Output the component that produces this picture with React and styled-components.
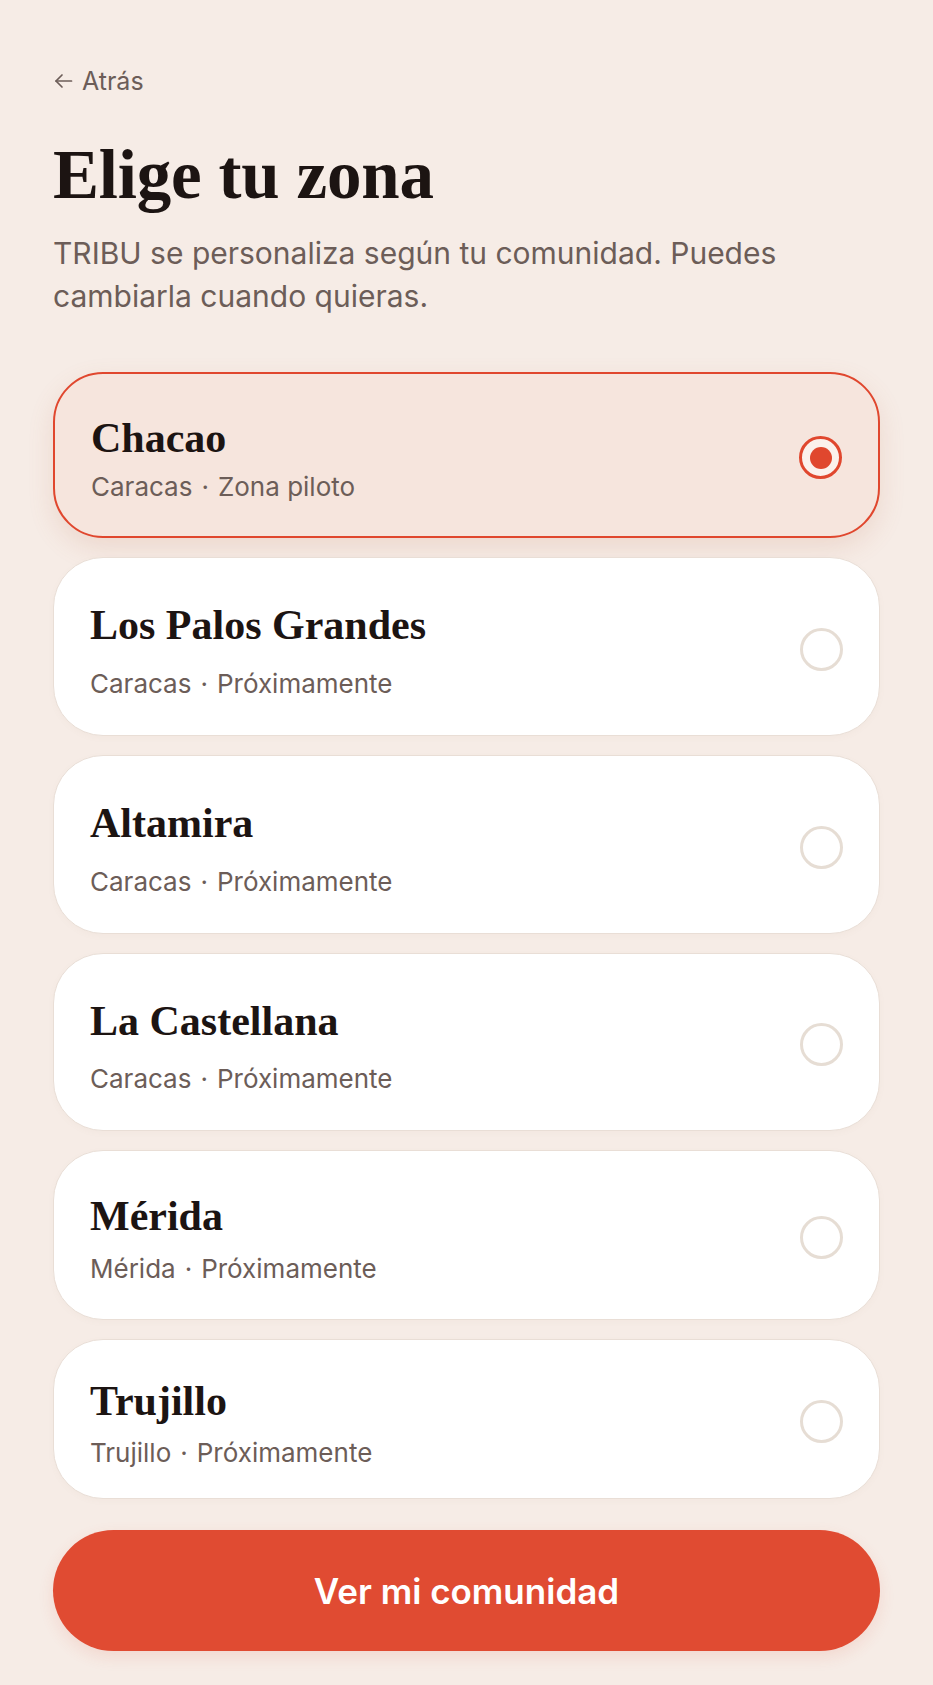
import React, { useState } from "react";
import styled, { createGlobalStyle } from "styled-components";

const GlobalStyle = createGlobalStyle`
  html, body {
    margin: 0;
    padding: 0;
    background: #f6ece6;
  }
  body {
    font-family: Inter, "Noto Sans", sans-serif;
    -webkit-font-smoothing: antialiased;
  }
  * { box-sizing: border-box; }
`;

const Page = styled.main`
  min-height: 1685px;
  padding: 66px 53px 0 53px;
  display: flex;
  flex-direction: column;
`;

const BackLink = styled.button`
  align-self: flex-start;
  display: inline-flex;
  align-items: center;
  gap: 9px;
  padding: 0;
  border: 0;
  background: none;
  color: #6c5d58;
  font-family: Inter, sans-serif;
  font-size: 25px;
  line-height: 30px;
  cursor: pointer;
  margin-left: 1px;
`;

const Title = styled.h1`
  margin: 43px 0 0 0;
  font-family: "Liberation Serif", serif;
  font-weight: 700;
  font-size: 69px;
  line-height: 72px;
  color: #1c1412;
  letter-spacing: -0.2px;
`;

const Lead = styled.p`
  margin: 21px 0 0 0;
  font-family: Inter, sans-serif;
  font-size: 30px;
  line-height: 43px;
  color: #6c5d58;
  max-width: 780px;
`;

const ZoneList = styled.ul`
  list-style: none;
  margin: 54px 0 0 0;
  padding: 0;
  display: flex;
  flex-direction: column;
  gap: 19px;
`;

const ZoneCard = styled.li`
  height: ${(p) => p.$h}px;
  padding: 5px 36px 0 36px;
  display: flex;
  align-items: center;
  justify-content: space-between;
  border-radius: 50px;
  border: ${(p) => (p.$active ? "2px solid #e0472e" : "1.5px solid #e9ded6")};
  background: ${(p) => (p.$active ? "#f6e5dd" : "#ffffff")};
  box-shadow: ${(p) =>
    p.$active
      ? "0 10px 26px rgba(190, 110, 80, 0.16)"
      : "0 2px 6px rgba(160, 120, 100, 0.04)"};
  cursor: pointer;
`;

const ZoneText = styled.div`
  display: flex;
  flex-direction: column;
`;

const ZoneName = styled.span`
  font-family: "Liberation Serif", serif;
  font-weight: 700;
  font-size: 42px;
  line-height: 50px;
  color: #1c1412;
`;

const ZoneMeta = styled.span`
  margin-top: ${(p) => p.$gap - 35}px;
  font-family: Inter, sans-serif;
  font-size: 26px;
  line-height: 30px;
  color: #6c5d58;
`;

const Dot = styled.span`
  margin: 0 9px;
`;

const Radio = styled.span`
  flex: none;
  width: 43px;
  height: 43px;
  border-radius: 50%;
  border: 3.5px solid ${(p) => (p.$active ? "#e0472e" : "#e6ddd4")};
  display: flex;
  align-items: center;
  justify-content: center;
  background: ${(p) => (p.$active ? "#fbf1ec" : "transparent")};
  &::after {
    content: "";
    display: ${(p) => (p.$active ? "block" : "none")};
    width: 22px;
    height: 22px;
    border-radius: 50%;
    background: #e0472e;
  }
`;

const PrimaryButton = styled.button`
  margin-top: 31px;
  height: 121px;
  border: 0;
  border-radius: 61px;
  background: #e04b32;
  color: #ffffff;
  font-family: Inter, sans-serif;
  font-weight: 600;
  font-size: 35px;
  box-shadow: 0 6px 16px rgba(224, 75, 50, 0.12);
  cursor: pointer;
`;

const ArrowIcon = () => (
  <svg width="19" height="16" viewBox="0 0 19 16" fill="none" stroke="currentColor" strokeWidth="1.7" strokeLinecap="round" strokeLinejoin="round">
    <path d="M17.5 8H2" />
    <path d="M8 2L2 8l6 6" />
  </svg>
);

const zones = [
  { name: "Chacao", city: "Caracas", status: "Zona piloto", h: 166, gap: 44 },
  { name: "Los Palos Grandes", city: "Caracas", status: "Próximamente", h: 179, gap: 54 },
  { name: "Altamira", city: "Caracas", status: "Próximamente", h: 179, gap: 54 },
  { name: "La Castellana", city: "Caracas", status: "Próximamente", h: 178, gap: 53 },
  { name: "Mérida", city: "Mérida", status: "Próximamente", h: 170, gap: 48 },
  { name: "Trujillo", city: "Trujillo", status: "Próximamente", h: 160, gap: 47 },
];

export default function App() {
  const [selected, setSelected] = useState("Chacao");
  return (
    <>
      <GlobalStyle />
      <Page>
        <BackLink>
          <ArrowIcon />
          Atrás
        </BackLink>
        <Title>Elige tu zona</Title>
        <Lead>
          TRIBU se personaliza según tu comunidad. Puedes cambiarla cuando quieras.
        </Lead>
        <ZoneList>
          {zones.map((z) => {
            const active = z.name === selected;
            return (
              <ZoneCard key={z.name} $active={active} $h={z.h} onClick={() => setSelected(z.name)}>
                <ZoneText>
                  <ZoneName>{z.name}</ZoneName>
                  <ZoneMeta $gap={z.gap}>
                    {z.city}
                    <Dot>·</Dot>
                    {z.status}
                  </ZoneMeta>
                </ZoneText>
                <Radio $active={active} />
              </ZoneCard>
            );
          })}
        </ZoneList>
        <PrimaryButton>Ver mi comunidad</PrimaryButton>
      </Page>
    </>
  );
}
